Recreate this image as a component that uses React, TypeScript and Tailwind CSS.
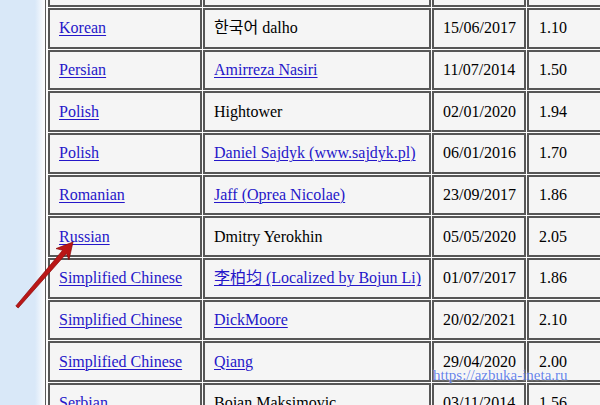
import React from 'react';

interface Row {
  lang: string;
  author: string;
  authorLink: boolean;
  date: string;
  version: string;
}

const rows: Row[] = [
  { lang: 'Japanese', author: '', authorLink: false, date: '', version: '' },
  { lang: 'Korean', author: '한국어 dalho', authorLink: false, date: '15/06/2017', version: '1.10' },
  { lang: 'Persian', author: 'Amirreza Nasiri', authorLink: true, date: '11/07/2014', version: '1.50' },
  { lang: 'Polish', author: 'Hightower', authorLink: false, date: '02/01/2020', version: '1.94' },
  { lang: 'Polish', author: 'Daniel Sajdyk (www.sajdyk.pl)', authorLink: true, date: '06/01/2016', version: '1.70' },
  { lang: 'Romanian', author: 'Jaff (Oprea Nicolae)', authorLink: true, date: '23/09/2017', version: '1.86' },
  { lang: 'Russian', author: 'Dmitry Yerokhin', authorLink: false, date: '05/05/2020', version: '2.05' },
  { lang: 'Simplified Chinese', author: '李柏均 (Localized by Bojun Li)', authorLink: true, date: '01/07/2017', version: '1.86' },
  { lang: 'Simplified Chinese', author: 'DickMoore', authorLink: true, date: '20/02/2021', version: '2.10' },
  { lang: 'Simplified Chinese', author: 'Qiang', authorLink: true, date: '29/04/2020', version: '2.00' },
  { lang: 'Serbian', author: 'Bojan Maksimovic', authorLink: false, date: '03/11/2014', version: '1.56' },
];

const cell = 'h-[40.67px] border-2 border-[#565656] bg-[#f5f5f5] align-middle whitespace-nowrap';
const link = 'text-[#2517c9] underline underline-offset-[2px] decoration-1';

function Arrow() {
  return (
    <svg className="absolute left-0 top-0 pointer-events-none" width="100" height="320" viewBox="0 0 100 320">
      <defs>
        <linearGradient id="ar" x1="0" y1="0" x2="1" y2="1">
          <stop offset="0" stopColor="#d42020" />
          <stop offset="1" stopColor="#a00d0d" />
        </linearGradient>
      </defs>
      <polygon
        points="73,242 68.97,259.8 66.4,253.5 18.2,308 15.8,306 62.6,250.3 56.03,248.6"
        fill="url(#ar)"
        stroke="#8a0a0a"
        strokeWidth="0.7"
        strokeLinejoin="round"
      />
    </svg>
  );
}

export default function App() {
  return (
    <div
      className="relative h-[405px] w-[600px] overflow-hidden bg-white flex"
      style={{ fontFamily: '"Liberation Serif", "Noto Sans CJK SC", serif' }}
    >
      <div className="w-[45px] shrink-0 bg-[linear-gradient(to_right,#d9e8f8_0px,#d9e8f8_35px,#fbfcfe_44px)]" />
      <div className="shrink-0 border-l border-[#5a5a5a] pl-[1px] bg-[#fdfdfd]">
        <table className="w-[591px] table-fixed -mt-[34.5px] border-separate border-spacing-[1px] text-[16px] text-black">
          <colgroup>
            <col className="w-[154px]" />
            <col className="w-[228px]" />
            <col className="w-[94px]" />
            <col className="w-[110px]" />
          </colgroup>
          <tbody>
            {rows.map((r, i) => (
              <tr key={i}>
                <td className={cell + ' pl-[9px]'}>
                  <a href="#" className={link}>{r.lang}</a>
                </td>
                <td className={cell + ' pl-[9px]'}>
                  {r.authorLink ? <a href="#" className={link}>{r.author}</a> : r.author}
                </td>
                <td className={cell + ' pl-[9px]'}>{r.date}</td>
                <td className={cell + ' pl-[10px]'}>{r.version}</td>
              </tr>
            ))}
          </tbody>
        </table>
      </div>
      <Arrow />
      <div className="absolute left-[433px] top-[364px] text-[15px] text-[#4a6de6]/85 [text-shadow:0_0_2px_#fff]">
        https://azbuka-ineta.ru
      </div>
    </div>
  );
}
